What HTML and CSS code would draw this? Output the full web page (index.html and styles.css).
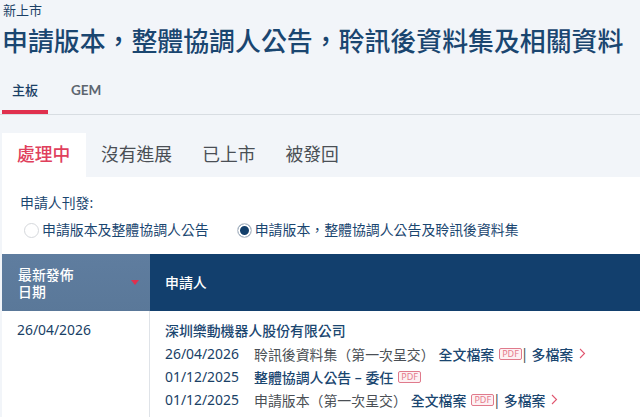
FILE: index.html
```html
<!DOCTYPE html>
<html lang="zh-Hant">
<head>
    <meta charset="UTF-8">
    <title>新上市</title>
    <link rel="stylesheet" href="styles.css">
</head>
<body>
    <div class="page-head">
        <div class="crumb">新上市</div>
        <h1>申請版本，整體協調人公告，聆訊後資料集及相關資料</h1>
    </div>

    <div class="board-tabs">
        <div class="board-tab active">主板</div>
        <div class="board-tab gem">GEM</div>
    </div>

    <div class="status-tabs">
        <div class="status-tab active">處理中</div>
        <div class="status-tab">沒有進展</div>
        <div class="status-tab">已上市</div>
        <div class="status-tab">被發回</div>
    </div>

    <div class="panel">
        <div class="filter">
            <div class="filter-label">申請人刊發:</div>
            <div class="filter-options">
                <div class="option"><span class="radio"></span>申請版本及整體協調人公告</div>
                <div class="option"><span class="radio checked"></span>申請版本，整體協調人公告及聆訊後資料集</div>
            </div>
        </div>

        <div class="table-head">
            <div class="col-date sort-col">
                <span>最新發佈<br>日期</span>
                <span class="sort-arrow"></span>
            </div>
            <div class="col-name">申請人</div>
        </div>

        <div class="table-row">
            <div class="col-date date-cell">26/04/2026</div>
            <div class="col-name name-cell">
                <div class="company">深圳樂動機器人股份有限公司</div>
                <div class="doc-row">
                    <span class="doc-date">26/04/2026</span>
                    <span class="doc-title">聆訊後資料集（第一次呈交）</span>
                    <span class="doc-link">全文檔案</span>
                    <span class="pdf">PDF</span>
                    <span class="sep">|</span>
                    <span class="doc-link">多檔案</span>
                    <svg class="chevron" width="7" height="11" viewBox="0 0 7 11"><path d="M1 1l4.500 4.500L1 10" fill="none" stroke="#e0566f" stroke-width="1.100"/></svg>
                </div>
                <div class="doc-row">
                    <span class="doc-date">01/12/2025</span>
                    <span class="doc-link">整體協調人公告 – 委任</span>
                    <span class="pdf">PDF</span>
                </div>
                <div class="doc-row">
                    <span class="doc-date">01/12/2025</span>
                    <span class="doc-title">申請版本（第一次呈交）</span>
                    <span class="doc-link">全文檔案</span>
                    <span class="pdf">PDF</span>
                    <span class="sep">|</span>
                    <span class="doc-link">多檔案</span>
                    <svg class="chevron" width="7" height="11" viewBox="0 0 7 11"><path d="M1 1l4.500 4.500L1 10" fill="none" stroke="#e0566f" stroke-width="1.100"/></svg>
                </div>
            </div>
        </div>
    </div>
</body>
</html>
```

FILE: styles.css
```css
body {
    font-family: "Noto Sans", "Noto Sans CJK TC", sans-serif;
    margin: 0;
    height: 417px;
    overflow: hidden;
    background-color: #f2f5f9;
    color: #333;
    font-size: 13.9px;
}
.page-head {
    padding: 1px 0 0 3px;
}
.crumb {
    font-size: 13px;
    line-height: 19px;
    color: #1a3f66;
}
h1 {
    margin: 2px 0 0 -1px;
    font-size: 25.900px;
    line-height: 38px;
    font-weight: 500;
    color: #1a4670;
    white-space: nowrap;
}
.board-tabs {
    display: flex;
    margin-top: 1px;
    height: 54px;
    box-sizing: border-box;
    border-bottom: 1px solid #d8dde2;
}
.board-tab {
    padding-top: 20px;
    height: 53px;
    box-sizing: border-box;
    font-size: 13px;
    line-height: 18px;
    font-weight: 500;
}
.board-tab.active {
    margin-left: 2px;
    width: 46px;
    padding-left: 10px;
    color: #1a3f66;
    border-bottom: 4px solid #e0304e;
}
.board-tab.gem {
    margin-left: 23px;
    font-family: Lato, "Noto Sans", sans-serif;
    font-weight: 700;
    font-size: 13.500px;
    color: #5d6670;
}
.status-tabs {
    display: flex;
    margin: 18px 0 0 2px;
    height: 44px;
}
.status-tab {
    padding: 0 15px;
    font-size: 17.800px;
    line-height: 43px;
    color: #4a4f55;
}
.status-tab.active {
    width: 84px;
    box-sizing: border-box;
    padding: 0 0 0 15px;
    background-color: white;
    color: #e0405c;
    font-weight: 500;
}
.panel {
    margin-left: 2px;
    background-color: white;
}
.filter {
    height: 77px;
    padding: 16px 0 0 18px;
    box-sizing: border-box;
    color: #1a4670;
}
.filter-label {
    line-height: 20px;
}
.filter-options {
    display: flex;
    gap: 28px;
    margin-top: 7px;
    margin-left: 4px;
}
.option {
    display: flex;
    align-items: center;
    gap: 3px;
    line-height: 20px;
}
.radio {
    width: 15px;
    height: 15px;
    box-sizing: border-box;
    border: 1px solid #d5d8dc;
    border-radius: 50%;
    background-color: white;
}
.radio.checked {
    background-color: #133f6b;
    box-shadow: inset 0 0 0 2px white;
}
.table-head {
    display: flex;
    height: 57px;
    color: white;
}
.col-date {
    width: 148px;
    box-sizing: border-box;
    flex-shrink: 0;
}
.col-name {
    flex: 1;
}
.table-head .col-name {
    background-color: #123f6d;
    padding-left: 15px;
    line-height: 57px;
    font-weight: 500;
}
.sort-col {
    display: flex;
    align-items: center;
    justify-content: space-between;
    padding: 0 11px 0 16px;
    background: linear-gradient(#5f7d9f, #5a7899);
    line-height: 17px;
    font-weight: 500;
}
.sort-arrow {
    width: 0;
    height: 0;
    border-left: 4px solid transparent;
    border-right: 4px solid transparent;
    border-top: 5px solid #e0304e;
}
.table-row {
    display: flex;
    height: 110px;
}
.date-cell {
    padding: 9px 0 0 15px;
    border-right: 1px solid #dfe3e8;
    color: #1a3f66;
    line-height: 20px;
}
.name-cell {
    padding: 8px 0 0 15px;
    color: #1a3f66;
}
.company {
    line-height: 23px;
    font-weight: 500;
    color: #1a4670;
}
.doc-row {
    display: flex;
    align-items: center;
    height: 23px;
    white-space: nowrap;
}
.doc-date {
    width: 89px;
}
.doc-title {
    color: #4a4f55;
    margin-right: 4px;
}
.doc-link {
    color: #1a4670;
    font-weight: 500;
}
.pdf {
    margin-left: 5px;
    padding: 0 2px;
    border: 1px solid #e07a8c;
    border-radius: 2px;
    background-color: #fdf1f3;
    color: #e57a8c;
    font-size: 9px;
    line-height: 10px;
}
.sep {
    margin: 0 3px 0 -1px;
    color: #4a4f55;
}
.chevron {
    margin-left: 6px;
}
```
